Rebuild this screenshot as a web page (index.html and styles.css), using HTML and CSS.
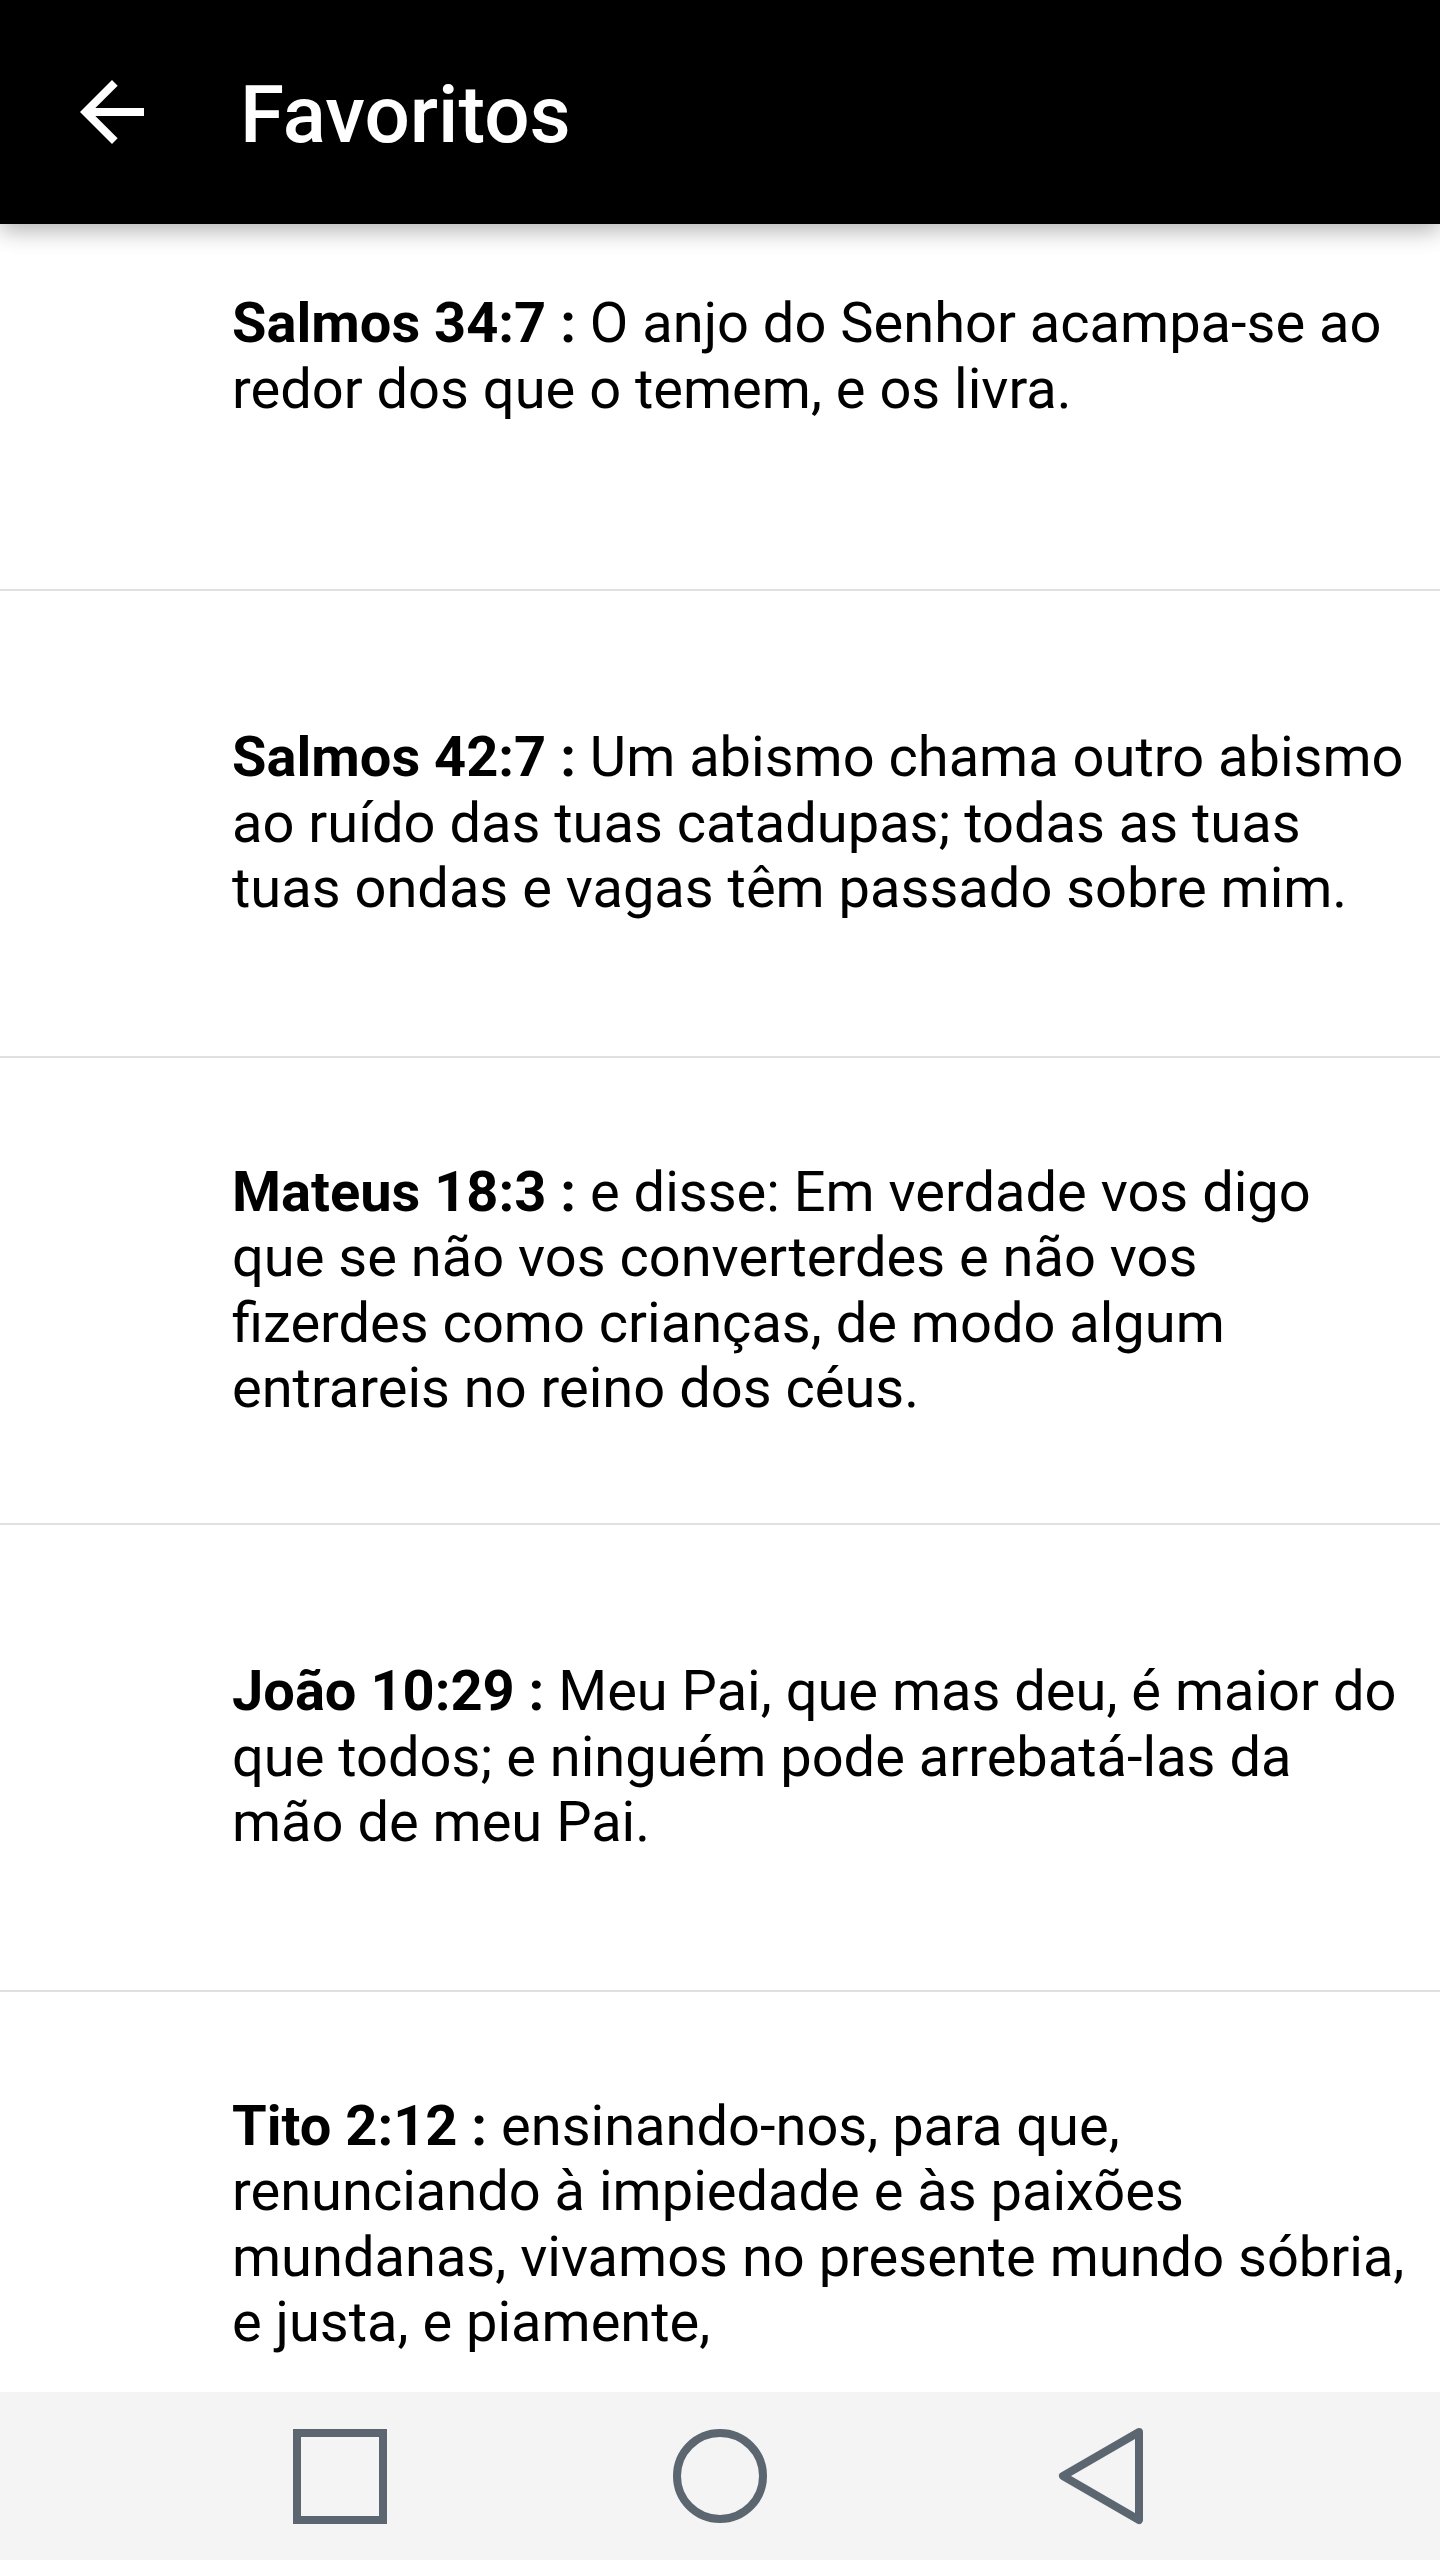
FILE: index.html
```html
<!DOCTYPE html>
<html lang="pt">
<head>
<meta charset="utf-8">
<title>Favoritos</title>
<link rel="stylesheet" href="styles.css">
</head>
<body>
<div class="app">
  <header class="toolbar">
    <div class="nav-icon">
      <svg viewBox="0 0 24 24" width="96" height="96"><path fill="#fff" d="M20 11H7.83l5.59-5.59L12 4l-8 8 8 8 1.41-1.41L7.83 13H20v-2z"/></svg>
    </div>
    <h1 class="title">Favoritos</h1>
  </header>
  <main class="content">
    <ul class="list">
      <li class="row"><p class="verse"><b>Salmos 34:7 :</b> O anjo do Senhor acampa-se ao redor dos que o temem, e os livra.</p></li>
      <li class="row"><p class="verse"><b>Salmos 42:7 :</b> Um abismo chama outro abismo ao ruído das tuas catadupas; todas as tuas tuas ondas e vagas têm passado sobre mim.</p></li>
      <li class="row"><p class="verse"><b>Mateus 18:3 :</b> e disse: Em verdade vos digo que se não vos converterdes e não vos fizerdes como crianças, de modo algum entrareis no reino dos céus.</p></li>
      <li class="row"><p class="verse"><b>João 10:29 :</b> Meu Pai, que mas deu, é maior do que todos; e ninguém pode arrebatá-las da mão de meu Pai.</p></li>
      <li class="row"><p class="verse"><b>Tito 2:12 :</b> ensinando-nos, para que, renunciando à impiedade e às paixões mundanas, vivamos no presente mundo sóbria, e justa, e piamente,</p></li>
    </ul>
  </main>
  <nav class="sysbar">
    <svg class="sys-icon" viewBox="0 0 100 100" width="100" height="100"><rect x="8" y="7" width="86" height="87" fill="none" stroke="#5c6670" stroke-width="8"/></svg>
    <svg class="sys-icon" viewBox="0 0 100 100" width="100" height="100"><circle cx="50" cy="50" r="43" fill="none" stroke="#5c6670" stroke-width="8"/></svg>
    <svg class="sys-icon" viewBox="0 0 100 100" width="100" height="100"><path d="M88 6 L12 50 L88 94 Z" fill="none" stroke="#5c6670" stroke-width="8" stroke-linejoin="round"/></svg>
  </nav>
</div>
</body>
</html>
```

FILE: styles.css
```css
html, body {
  margin: 0;
  padding: 0;
  background: #fff;
}

body {
  font-family: Roboto, "Noto Sans", "Liberation Sans", sans-serif;
  color: #000;
}

.app {
  width: 1440px;
  height: 2560px;
  display: flex;
  flex-direction: column;
  overflow: hidden;
}

.toolbar {
  flex: 0 0 224px;
  background: #000;
  display: flex;
  align-items: center;
  position: relative;
  z-index: 2;
  box-shadow: 0 6px 22px rgba(0, 0, 0, 0.32);
}

.nav-icon {
  width: 96px;
  height: 96px;
  margin-left: 64px;
  display: flex;
}

.title {
  margin: 0 0 0 80px;
  color: #fff;
  font-size: 80px;
  font-weight: 500;
  line-height: 1;
  padding-top: 6px;
}

.content {
  flex: 1 1 auto;
  overflow: hidden;
  position: relative;
  z-index: 1;
}

.list {
  list-style: none;
  margin: -100px 0 0 0;
  padding: 0;
}

.row {
  height: 465px;
  border-bottom: 2px solid #e0e0e0;
  display: flex;
  align-items: center;
  padding: 0 34px 0 232px;
}

.verse {
  margin: 0;
  font-size: 56px;
  line-height: 65.5px;
}

.verse b {
  font-weight: 700;
}

.sysbar {
  flex: 0 0 168px;
  background: #f4f4f4;
  display: flex;
  align-items: center;
  justify-content: center;
  gap: 281px;
  position: relative;
  z-index: 2;
}

.sys-icon {
  display: block;
}
```
